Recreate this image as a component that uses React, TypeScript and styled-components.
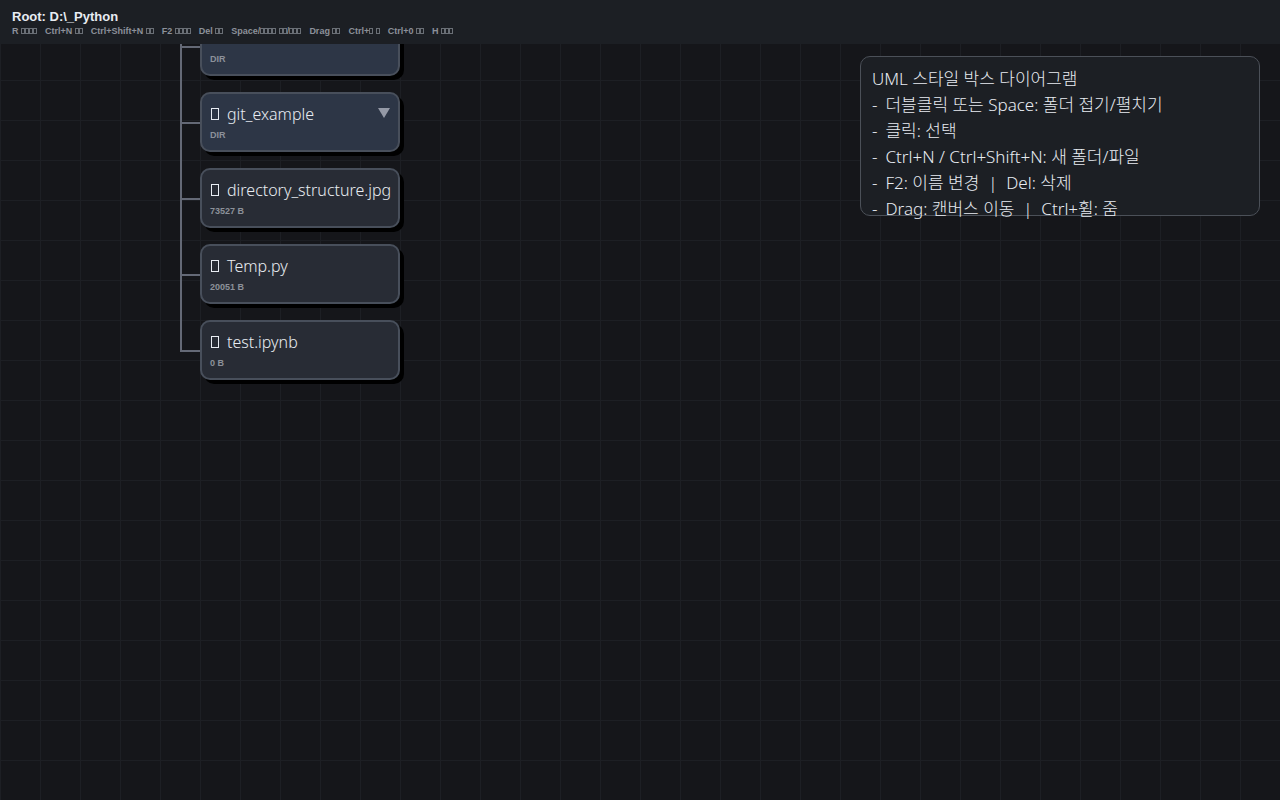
import React from "react";
import styled, { createGlobalStyle } from "styled-components";

const colors = {
  canvas: "#15161a",
  grid: "#1d1f24",
  surface: "#1c1f24",
  panelBorder: "#4b5058",
  folder: "#2d3646",
  file: "#282c35",
  cardBorder: "#484f5b",
  wire: "#646976",
  text: "#e8ecf2",
  muted: "#8c919a",
};

const GlobalStyle = createGlobalStyle`
  *, *::before, *::after { box-sizing: border-box; }
  body {
    margin: 0;
    background: ${colors.canvas};
    color: ${colors.text};
    font-family: "Liberation Sans", sans-serif;
  }
`;

const Canvas = styled.main`
  display: flex;
  justify-content: space-between;
  align-items: flex-start;
  min-height: 100vh;
  padding: 16px 20px 16px 180px;
  background-color: ${colors.canvas};
  background-image:
    linear-gradient(to right, ${colors.grid} 1px, transparent 1px),
    linear-gradient(to bottom, ${colors.grid} 1px, transparent 1px);
  background-size: 40px 40px;
`;

const TopBar = styled.header`
  position: fixed;
  inset: 0 0 auto 0;
  z-index: 1;
  height: 44px;
  padding: 9px 12px 0;
  background: ${colors.surface};
`;

const RootPath = styled.h1`
  margin: 0;
  font-size: 13px;
  line-height: 16px;
  font-weight: 700;
`;

const Shortcuts = styled.ul`
  display: flex;
  gap: 8px;
  margin: 0;
  padding: 0;
  list-style: none;
  font-size: 9px;
  line-height: 12px;
  font-weight: 700;
  color: ${colors.muted};
  white-space: pre;
`;

const SmallBox = styled.span`
  display: inline-block;
  width: 4px;
  height: 6px;
  border: 1px solid currentColor;
  opacity: 0.7;
`;

const Tree = styled.ul`
  margin: 0;
  padding: 0;
  list-style: none;
`;

const Branch = styled.li`
  position: relative;
  padding: 0 0 16px 20px;

  &::before {
    content: "";
    position: absolute;
    left: 0;
    top: -16px;
    bottom: 0;
    width: 2px;
    background: ${colors.wire};
  }

  &:last-child {
    padding-bottom: 0;
  }

  &:last-child::before {
    bottom: 28px;
  }

  &::after {
    content: "";
    position: absolute;
    left: 0;
    top: 30px;
    width: 20px;
    height: 2px;
    background: ${colors.wire};
  }
`;

const Card = styled.article<{ $folder: boolean }>`
  display: flex;
  justify-content: space-between;
  align-items: flex-start;
  width: 200px;
  height: 60px;
  padding: 10px 8px 0;
  border: 2px solid ${colors.cardBorder};
  border-radius: 10px;
  background: ${(p) => (p.$folder ? colors.folder : colors.file)};
  box-shadow: 4px 4px 0 #000;
`;

const CardName = styled.h2`
  display: flex;
  align-items: center;
  gap: 8px;
  height: 20px;
  margin: 0;
  font-family: "Noto Sans", "Open Sans", sans-serif;
  font-size: 16px;
  line-height: 20px;
  font-weight: 300;
  white-space: nowrap;
`;

const FileBox = styled.span`
  width: 8px;
  height: 12px;
  margin-left: 1px;
  border: 1px solid currentColor;
`;

const CardMeta = styled.p`
  margin: 5px 0 0;
  font-size: 9px;
  line-height: 12px;
  font-weight: 700;
  color: ${colors.muted};
`;

const Toggle = styled.button`
  display: flex;
  margin: 4px 0 0;
  padding: 0;
  border: 0;
  background: none;
  color: #9499a6;
  cursor: pointer;
`;

const HelpPanel = styled.aside`
  width: 400px;
  height: 160px;
  margin-top: 40px;
  padding: 9px 11px;
  border: 1px solid ${colors.panelBorder};
  border-radius: 10px;
  background: ${colors.surface};
  font-family: "Noto Sans", "Noto Sans CJK KR", sans-serif;
  font-size: 17px;
  line-height: 26px;
  font-weight: 300;
  white-space: pre;
`;

const HelpTitle = styled.p`
  margin: 0;
`;

const HelpList = styled.ul`
  margin: 0;
  padding: 0;
  list-style: none;
`;

const HelpItem = styled.li`
  display: flex;
  gap: 8px;
`;

/* A number stands for that many placeholder boxes. */
const shortcuts: (string | number)[][] = [
  ["R ", 4],
  ["Ctrl+N ", 2],
  ["Ctrl+Shift+N ", 2],
  ["F2 ", 4],
  ["Del ", 2],
  ["Space/", 4, " ", 2, "/", 3],
  ["Drag ", 2],
  ["Ctrl+", 1, " ", 1],
  ["Ctrl+0 ", 2],
  ["H ", 3],
];

type Entry = { name?: string; meta: string; folder?: boolean };

const entries: Entry[] = [
  { meta: "DIR", folder: true },
  { name: "git_example", meta: "DIR", folder: true },
  { name: "directory_structure.jpg", meta: "73527 B" },
  { name: "Temp.py", meta: "20051 B" },
  { name: "test.ipynb", meta: "0 B" },
];

const help = [
  "더블클릭 또는 Space: 폴더 접기/펼치기",
  "클릭: 선택",
  "Ctrl+N / Ctrl+Shift+N: 새 폴더/파일",
  "F2: 이름 변경  |  Del: 삭제",
  "Drag: 캔버스 이동  |  Ctrl+휠: 줌",
];

function Boxes({ count }: { count: number }) {
  return (
    <>
      {Array.from({ length: count }, (_, i) => (
        <SmallBox key={i} />
      ))}
    </>
  );
}

export default function App() {
  return (
    <>
      <GlobalStyle />
      <TopBar>
        <RootPath>Root: D:\_Python</RootPath>
        <Shortcuts>
          {shortcuts.map((parts, i) => (
            <li key={i}>
              {parts.map((part, j) =>
                typeof part === "number" ? <Boxes key={j} count={part} /> : part
              )}
            </li>
          ))}
        </Shortcuts>
      </TopBar>
      <Canvas>
        <Tree>
          {entries.map((entry, i) => (
            <Branch key={i}>
              <Card $folder={Boolean(entry.folder)}>
                <div>
                  <CardName>
                    <FileBox />
                    {entry.name}
                  </CardName>
                  <CardMeta>{entry.meta}</CardMeta>
                </div>
                {entry.folder && (
                  <Toggle type="button">
                    <svg width="12" height="10" viewBox="0 0 12 10" aria-hidden="true">
                      <path d="M0 0H12L6 10Z" fill="currentColor" />
                    </svg>
                  </Toggle>
                )}
              </Card>
            </Branch>
          ))}
        </Tree>
        <HelpPanel>
          <HelpTitle>UML 스타일 박스 다이어그램</HelpTitle>
          <HelpList>
            {help.map((line) => (
              <HelpItem key={line}>
                <span>-</span>
                <span>{line}</span>
              </HelpItem>
            ))}
          </HelpList>
        </HelpPanel>
      </Canvas>
    </>
  );
}
